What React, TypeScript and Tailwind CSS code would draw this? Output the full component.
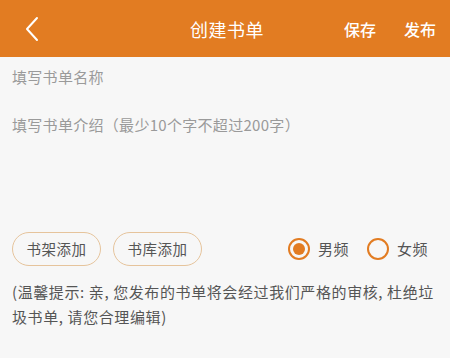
import { useState } from 'react';

const font = 'font-["Noto_Sans_CJK_SC","Noto_Sans",sans-serif]';

type Channel = 'male' | 'female';

const Radio = ({ checked, label, onClick }: { checked: boolean; label: string; onClick: () => void }) => (
  <button type="button" onClick={onClick} className="flex items-center gap-[8px]">
    <span className="flex h-[22px] w-[22px] items-center justify-center rounded-full border-[2.5px] border-[#E27C22]">
      {checked && <span className="h-[12px] w-[12px] rounded-full bg-[#E27C22]" />}
    </span>
    <span className="text-[15px] leading-5 tracking-[0.5px] text-[#555]">{label}</span>
  </button>
);

const App = () => {
  const [name, setName] = useState('');
  const [intro, setIntro] = useState('');
  const [channel, setChannel] = useState<Channel>('male');

  return (
    <div className={`flex h-[358px] w-full flex-col bg-[#F7F7F7] ${font}`}>
      <header className="flex h-[57px] shrink-0 items-center bg-[#E27C22] pl-[24px] pr-[14px] text-white">
        <button type="button" className="flex w-[60px] items-center">
          <svg width="16" height="26" viewBox="0 0 16 26" fill="none">
            <path d="M13 2L3 13l10 11" stroke="white" strokeWidth="2" strokeLinecap="round" strokeLinejoin="round" />
          </svg>
        </button>
        <h1 className="flex-1 pl-[26px] text-center text-[18px] leading-6 tracking-[0.5px]">创建书单</h1>
        <div className="flex gap-[28px] text-[16px] font-medium leading-6">
          <button type="button">保存</button>
          <button type="button">发布</button>
        </div>
      </header>

      <input
        value={name}
        onChange={event => setName(event.target.value)}
        placeholder="填写书单名称"
        className="mt-[10px] h-[20px] bg-transparent px-[12px] text-[15px] leading-5 tracking-[0.3px] text-[#333] outline-none placeholder:text-[#9a9a9a]"
      />

      <textarea
        value={intro}
        onChange={event => setIntro(event.target.value)}
        placeholder="填写书单介绍（最少10个字不超过200字）"
        className="mt-[28px] h-[104px] resize-none bg-transparent px-[12px] text-[15px] leading-5 tracking-[0.3px] text-[#333] outline-none placeholder:text-[#9a9a9a]"
      />

      <div className="mt-[13px] flex items-center px-[12px]">
        <button
          type="button"
          className="h-[34px] w-[89px] rounded-full border border-[#E6C49C] text-[14.5px] tracking-[0.5px] text-[#555]"
        >
          书架添加
        </button>
        <button
          type="button"
          className="ml-[12px] h-[34px] w-[89px] rounded-full border border-[#E6C49C] text-[14.5px] tracking-[0.5px] text-[#555]"
        >
          书库添加
        </button>
        <div className="ml-auto mr-[10px] flex gap-[18px]">
          <Radio checked={channel === 'male'} label="男频" onClick={() => setChannel('male')} />
          <Radio checked={channel === 'female'} label="女频" onClick={() => setChannel('female')} />
        </div>
      </div>

      <p className="mt-[13px] px-[12px] text-[15px] leading-[25px] tracking-[0.6px] text-[#555]">
        (温馨提示: 亲, 您发布的书单将会经过我们严格的审核, 杜绝垃圾书单, 请您合理编辑)
      </p>
    </div>
  );
};

export default App;
